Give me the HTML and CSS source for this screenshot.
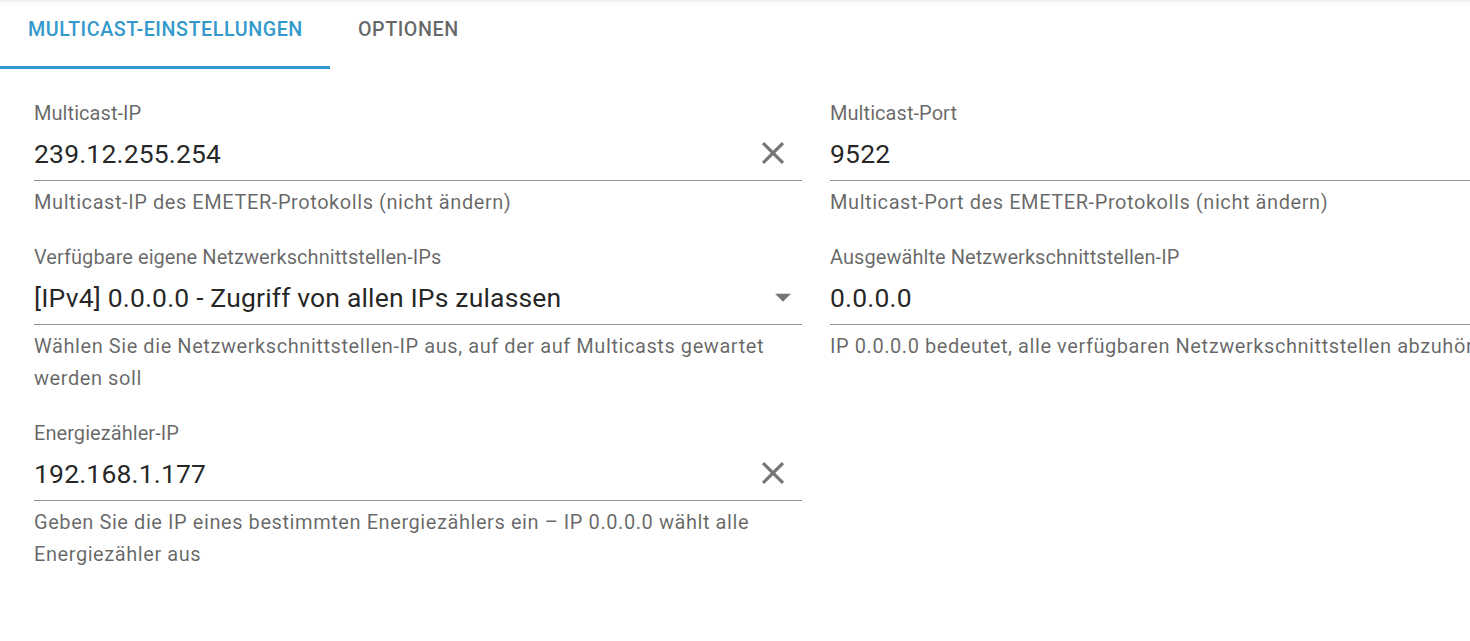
FILE: index.html
```html
<!DOCTYPE html>
<html lang="de">
<head>
<meta charset="utf-8">
<title>Multicast-Einstellungen</title>
<link rel="stylesheet" href="styles.css">
</head>
<body>
<div class="page">
  <nav class="tabs">
    <div class="tab tab-active">Multicast-Einstellungen</div>
    <div class="tab">Optionen</div>
  </nav>
  <main class="form">
    <div class="field">
      <div class="label">Multicast-IP</div>
      <div class="input">
        <span class="value">239.12.255.254</span>
        <svg class="icon-clear" viewBox="0 0 24 24"><path d="M19 6.41 17.59 5 12 10.59 6.41 5 5 6.41 10.59 12 5 17.59 6.41 19 12 13.41 17.59 19 19 17.59 13.41 12z"/></svg>
      </div>
      <div class="helper">Multicast-IP des EMETER-Protokolls (nicht ändern)</div>
    </div>
    <div class="field">
      <div class="label">Multicast-Port</div>
      <div class="input">
        <span class="value">9522</span>
      </div>
      <div class="helper">Multicast-Port des EMETER-Protokolls (nicht ändern)</div>
    </div>
    <div class="field">
      <div class="label">Verfügbare eigene Netzwerkschnittstellen-IPs</div>
      <div class="input">
        <span class="value">[IPv4] 0.0.0.0 - Zugriff von allen IPs zulassen</span>
        <svg class="icon-drop" viewBox="0 0 24 24"><path d="M7 10l5 5 5-5z"/></svg>
      </div>
      <div class="helper">Wählen Sie die Netzwerkschnittstellen-IP aus, auf der auf Multicasts gewartet werden soll</div>
    </div>
    <div class="field">
      <div class="label">Ausgewählte Netzwerkschnittstellen-IP</div>
      <div class="input">
        <span class="value">0.0.0.0</span>
      </div>
      <div class="helper">IP 0.0.0.0 bedeutet, alle verfügbaren Netzwerkschnittstellen abzuhören</div>
    </div>
    <div class="field">
      <div class="label">Energiezähler-IP</div>
      <div class="input">
        <span class="value">192.168.1.177</span>
        <svg class="icon-clear" viewBox="0 0 24 24"><path d="M19 6.41 17.59 5 12 10.59 6.41 5 5 6.41 10.59 12 5 17.59 6.41 19 12 13.41 17.59 19 19 17.59 13.41 12z"/></svg>
      </div>
      <div class="helper">Geben Sie die IP eines bestimmten Energiezählers ein – IP 0.0.0.0 wählt alle Energiezähler aus</div>
    </div>
  </main>
</div>
</body>
</html>
```
FILE: styles.css
```css
html, body {
  margin: 0;
  padding: 0;
  background: #fff;
  overflow: hidden;
}

body {
  font-family: Roboto, "Liberation Sans", sans-serif;
  width: 1470px;
  height: 641px;
}

.page {
  height: 641px;
  background: linear-gradient(rgba(0, 0, 0, 0.07), rgba(0, 0, 0, 0.02) 3px, rgba(255, 255, 255, 0) 7px), #fff;
}

.tabs {
  display: flex;
  height: 69px;
}

.tab {
  box-sizing: border-box;
  height: 69px;
  padding: 18px 27px 0 28px;
  line-height: 24px;
  font-size: 19.7px;
  font-weight: 500;
  letter-spacing: 0.02857em;
  text-transform: uppercase;
  color: rgba(0, 0, 0, 0.6);
  border-bottom: 3px solid transparent;
}

.tab-active {
  color: #3399cc;
  border-bottom-color: #3399cc;
}

.form {
  display: grid;
  grid-template-columns: 768px 768px;
  column-gap: 28px;
  row-gap: 27px;
  padding: 32px 0 0 34px;
  align-items: start;
}

.field {
  display: flex;
  flex-direction: column;
}

.label {
  font-size: 20px;
  line-height: 24px;
  letter-spacing: 0.06px;
  color: rgba(0, 0, 0, 0.6);
  white-space: nowrap;
}

.input {
  display: flex;
  align-items: center;
  height: 55px;
  border-bottom: 1px solid rgba(0, 0, 0, 0.42);
}

.value {
  flex: 1;
  font-size: 26.5px;
  line-height: 32px;
  letter-spacing: 0.17px;
  color: rgba(0, 0, 0, 0.87);
  padding-top: 2px;
}

.icon-clear {
  width: 38px;
  height: 38px;
  margin-right: 10px;
  fill: rgba(0, 0, 0, 0.54);
}

.icon-drop {
  width: 38px;
  height: 38px;
  fill: rgba(0, 0, 0, 0.54);
}

.helper {
  margin-top: 5px;
  font-size: 20px;
  line-height: 32px;
  letter-spacing: 0.57px;
  color: rgba(0, 0, 0, 0.6);
}
```
